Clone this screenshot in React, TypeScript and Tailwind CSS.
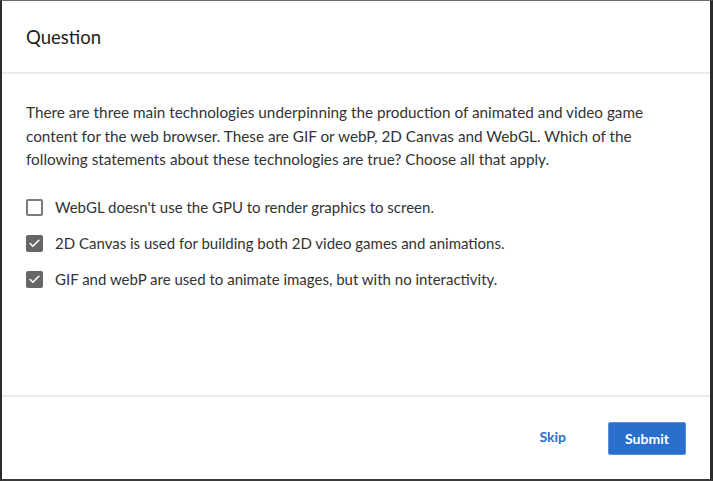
import { Check } from "lucide-react";

const OPTIONS = [
  { label: "WebGL doesn't use the GPU to render graphics to screen.", checked: false },
  { label: "2D Canvas is used for building both 2D video games and animations.", checked: true },
  { label: "GIF and webP are used to animate images, but with no interactivity.", checked: true },
];

function Box({ checked }: { checked: boolean }) {
  if (checked) {
    return (
      <span className="flex h-[17px] w-[17px] shrink-0 items-center justify-center rounded-[2px] bg-[#666]">
        <Check className="h-[13px] w-[13px] text-white" strokeWidth={3} />
      </span>
    );
  }
  return <span className="h-[17px] w-[17px] shrink-0 rounded-[2px] border-2 border-[#7a7a7a] bg-white" />;
}

export default function App() {
  return (
    <div
      className="flex h-[481px] w-[713px] flex-col border-t border-r-[3px] border-b-2 border-l-2 border-t-[#6b6b6b] border-r-[#2b2b2b] border-b-[#3a3a3a] border-l-[#2b2b2b] bg-white text-[#2a2a2a]"
      style={{ fontFamily: '"Lato", "Open Sans", sans-serif' }}
    >
      <header className="flex h-[73px] items-center border-b-2 border-[#ececec] px-6">
        <h1 className="pt-[2px] text-[18.5px] text-[#222]">Question</h1>
      </header>

      <main className="flex-1 px-6 pt-[27px]">
        <p className="text-[15.3px] leading-[23.5px] text-[#333]">
          There are three main technologies underpinning the production of animated and video game
          content for the web browser. These are GIF or webP, 2D Canvas and WebGL. Which of the
          following statements about these technologies are true? Choose all that apply.
        </p>
        <div className="mt-[25px] flex flex-col gap-[14px]">
          {OPTIONS.map((o) => (
            <label key={o.label} className="flex h-[22px] items-center gap-3 text-[15px] text-[#333]">
              <Box checked={o.checked} />
              <span>{o.label}</span>
            </label>
          ))}
        </div>
      </main>

      <footer className="flex h-[84px] items-center justify-end gap-[26px] border-t-2 border-[#ececec] px-6">
        <button className="px-4 pb-[3px] text-[14px] font-bold text-[#2b6fcc]">Skip</button>
        <button className="h-[33px] w-[78px] rounded-[2px] border border-[#5a8fdc] bg-[#2b6fcc] text-[14px] font-bold text-white">
          Submit
        </button>
      </footer>
    </div>
  );
}
